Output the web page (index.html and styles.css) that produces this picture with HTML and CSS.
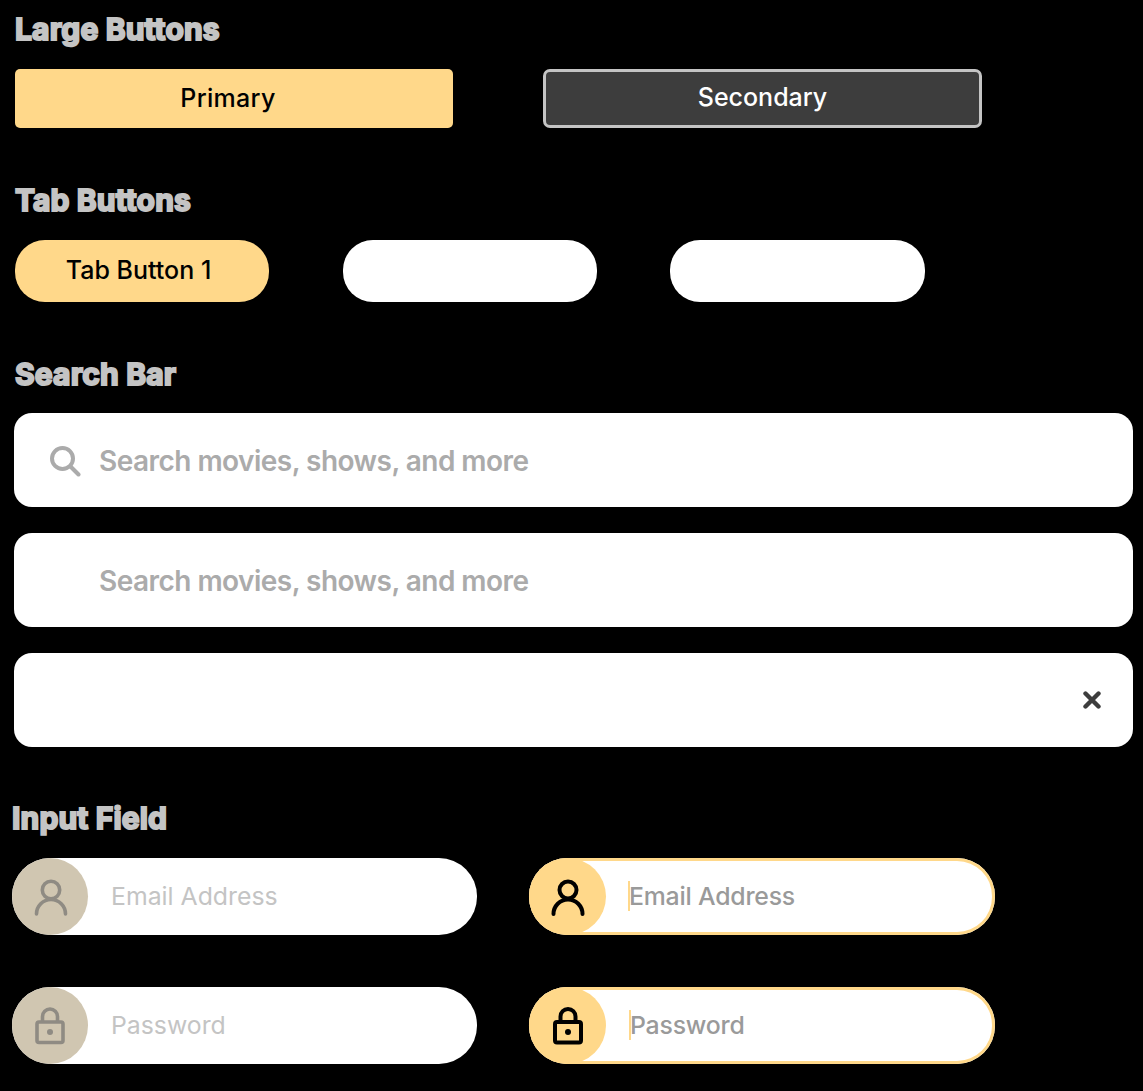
FILE: index.html
```html
<!DOCTYPE html>
<html lang="en">
<head>
<meta charset="utf-8">
<title>UI Components</title>
<link rel="stylesheet" href="styles.css">
</head>
<body>
<main class="page">
  <section class="section section-large">
    <h2 class="heading">Large Buttons</h2>
    <div class="large-row">
      <button class="btn btn-primary">Primary</button>
      <button class="btn btn-secondary">Secondary</button>
    </div>
  </section>

  <section class="section section-tabs">
    <h2 class="heading">Tab Buttons</h2>
    <div class="tab-row">
      <button class="tab tab-active">Tab Button 1</button>
      <button class="tab"></button>
      <button class="tab tab-last"></button>
    </div>
  </section>

  <section class="section section-search">
    <h2 class="heading">Search Bar</h2>
    <div class="search-list">
      <div class="search">
        <svg class="search-icon" width="32" height="32" viewBox="0 0 32 32" fill="none" stroke="#ababab" stroke-width="4" stroke-linecap="round"><circle cx="13.500" cy="13.500" r="10.500"/><path d="M21.500 21.500l8 8"/></svg>
        <span class="search-text">Search movies, shows, and more</span>
      </div>
      <div class="search search-noicon">
        <span class="search-text">Search movies, shows, and more</span>
      </div>
      <div class="search search-clear">
        <svg width="18" height="18" viewBox="0 0 18 18" fill="none" stroke="#3d3d3d" stroke-width="4.400" stroke-linecap="round"><path d="M2.500 2.500l13 13M15.500 2.500l-13 13"/></svg>
      </div>
    </div>
  </section>

  <section class="section section-input">
    <h2 class="heading heading-input">Input Field</h2>
    <div class="input-grid">
      <div class="field">
        <span class="field-icon">
          <svg class="person" width="36" height="38" viewBox="0 0 36 38" fill="none" stroke="#8f8b83" stroke-width="3.600" stroke-linecap="round"><circle cx="18" cy="12" r="8.700"/><path d="M3.500 36c0-8 6.500-14.500 14.500-14.500S32.500 28 32.500 36"/></svg>
        </span>
        <span class="field-text">Email Address</span>
      </div>
      <div class="field field-focus">
        <span class="field-icon">
          <svg class="person" width="36" height="38" viewBox="0 0 36 38" fill="none" stroke="#000" stroke-width="4" stroke-linecap="round"><circle cx="18" cy="12" r="8.500"/><path d="M3.500 36c0-8 6.500-14.500 14.500-14.500S32.500 28 32.500 36"/></svg>
        </span>
        <span class="field-text"><span class="caret"></span>Email Address</span>
      </div>
      <div class="field">
        <span class="field-icon">
          <svg width="32" height="38" viewBox="0 0 32 38" fill="none" stroke="#8f8b83" stroke-width="3.600" stroke-linejoin="round"><rect x="3" y="15" width="26" height="20.500" rx="2"/><path d="M8.500 15V9.500a7.500 7.500 0 0 1 15 0V15"/><circle cx="16" cy="25" r="3" fill="#8f8b83" stroke="none"/></svg>
        </span>
        <span class="field-text">Password</span>
      </div>
      <div class="field field-focus">
        <span class="field-icon">
          <svg width="32" height="38" viewBox="0 0 32 38" fill="none" stroke="#000" stroke-width="4" stroke-linejoin="round"><rect x="3" y="15" width="26" height="20.500" rx="2"/><path d="M8.500 15V9.500a7.500 7.500 0 0 1 15 0V15"/><circle cx="16" cy="25" r="3" fill="#000" stroke="none"/></svg>
        </span>
        <span class="field-text field-text-shift"><span class="caret"></span>Password</span>
      </div>
    </div>
  </section>
</main>
</body>
</html>
```

FILE: styles.css
```css
* { box-sizing: border-box; }

html, body {
  margin: 0;
  background: #000;
}

body {
  font-family: Inter, "Liberation Sans", sans-serif;
  width: 1143px;
  height: 1091px;
  overflow: hidden;
}

.page {
  display: flex;
  flex-direction: column;
}

.section-large { padding: 11px 0 0 15px; }
.section-tabs { padding: 54px 0 0 15px; }
.section-search { padding: 54px 0 0 14px; }
.section-input { padding: 53px 0 0 12px; }

.heading {
  margin: 0;
  height: 36px;
  line-height: 36px;
  font-size: 30px;
  font-weight: 700;
  letter-spacing: 0.150px;
  color: #c4c4c4;
  -webkit-text-stroke: 2px #c4c4c4;
}

.large-row {
  display: flex;
  gap: 90px;
  margin-top: 22px;
}

.btn {
  width: 438px;
  height: 59px;
  border: 0;
  border-radius: 5px;
  font-family: inherit;
  font-size: 25px;
  font-weight: 500;
  padding: 0;
}

.btn-primary {
  background: #ffd88a;
  color: #000;
  padding: 0 12px 2px 0;
  letter-spacing: 0.3px;
}

.btn-secondary {
  width: 439px;
  background: #3d3d3d;
  border: 3px solid #c4c4c4;
  color: #fff;
  border-radius: 7px;
  padding-bottom: 3px;
}

.tab-row {
  display: flex;
  gap: 74px;
  margin-top: 22px;
}

.tab {
  width: 254px;
  height: 62px;
  border: 0;
  border-radius: 30px;
  background: #fff;
  font-family: inherit;
  font-size: 25px;
  font-weight: 500;
  color: #000;
  padding: 0 7px 2px 0;
}

.tab-active { background: #ffd88a; }

.tab-last {
  width: 255px;
  margin-left: -1px;
}

.section-search .heading { margin-left: 1px; }

.search-list {
  display: flex;
  flex-direction: column;
  gap: 26px;
  margin-top: 21px;
}

.search {
  width: 1119px;
  height: 94px;
  border-radius: 18px;
  background: #fff;
  display: flex;
  align-items: center;
  padding-left: 35px;
  gap: 18px;
}

.search-icon { flex: none; margin-top: 2px; }

.search-noicon { padding-left: 85px; }

.search-clear {
  justify-content: flex-end;
  padding: 0 32px 0 0;
}

.search-text {
  font-size: 28px;
  font-weight: 600;
  letter-spacing: -0.530px;
  color: #ababab;
  margin-top: 2px;
}

.heading-input { margin-bottom: 22px; }

.input-grid {
  display: grid;
  grid-template-columns: 465px 466px;
  column-gap: 52px;
  row-gap: 52px;
}

.field {
  height: 77px;
  border-radius: 38px;
  background: #fff;
  display: flex;
  align-items: center;
}

.field-focus {
  box-shadow: inset 0 0 0 3px #ffd88a;
}

.field-icon {
  flex: none;
  width: 76px;
  height: 77px;
  border-radius: 50%;
  background: #d0c6b1;
  display: flex;
  align-items: center;
  justify-content: center;
}

.field-focus .field-icon {
  width: 77px;
  background: #ffd88a;
}

.person { margin-left: 1px; }

.field-text {
  margin: -2px 0 0 23px;
  font-size: 24.800px;
  color: #c4c4c4;
  position: relative;
}

.field-focus .field-text { color: #9a9a9a; font-weight: 500; letter-spacing: -0.200px; }

.field-focus .field-text-shift { margin-left: 24px; }

.caret {
  position: absolute;
  left: -1px;
  top: 0;
  width: 2px;
  height: 30px;
  background: #ffd88a;
}
```
